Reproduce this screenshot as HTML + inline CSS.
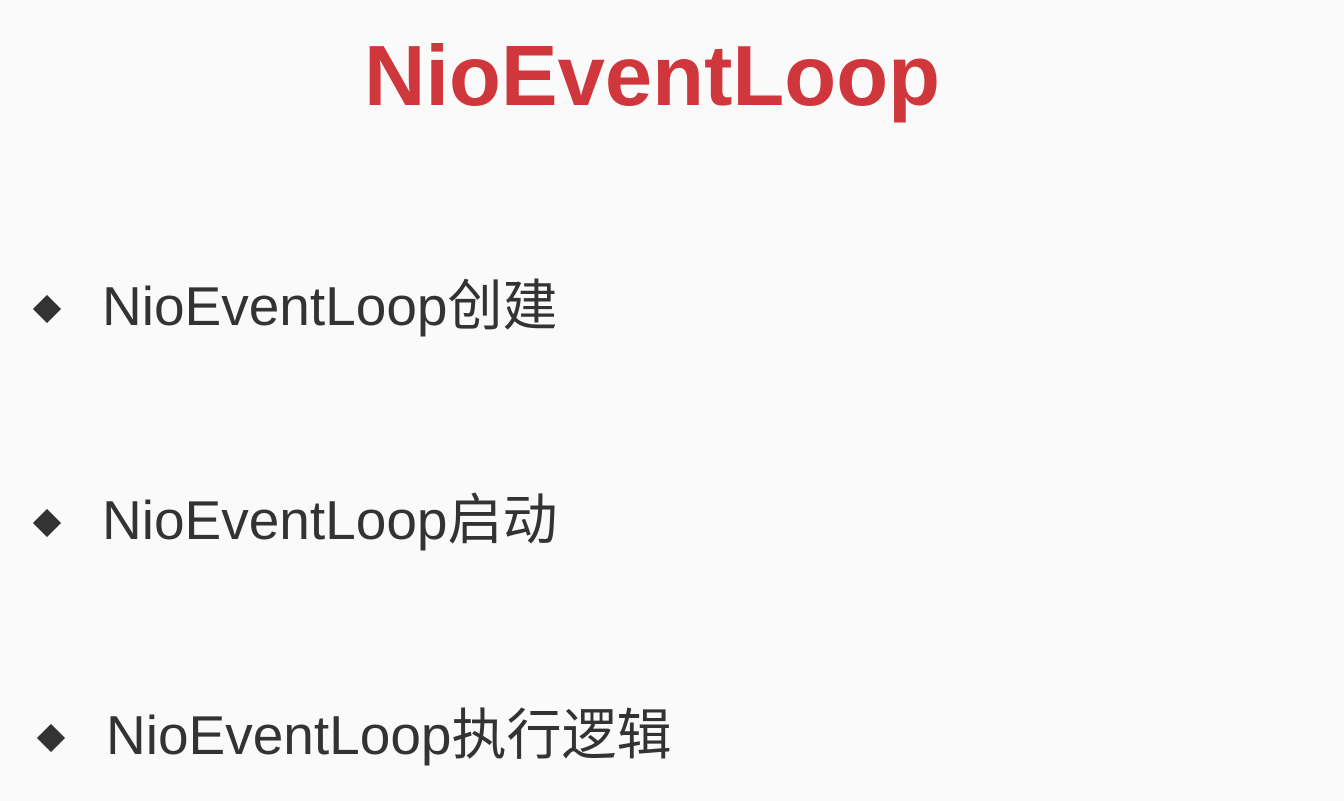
<!DOCTYPE html>
<html><head><meta charset="utf-8"><style>
body{margin:0;width:1344px;height:801px;background:#fafafa;position:relative;overflow:hidden;font-family:"Liberation Sans","Noto Sans CJK SC",sans-serif}
.t{position:absolute;left:364px;top:28px;font-size:85px;font-weight:bold;color:#d0373c;line-height:1.149;white-space:nowrap;letter-spacing:0px}
.i{position:absolute;font-size:55px;color:#333;line-height:1.149;white-space:nowrap}
.d{position:absolute;width:20px;height:20px;background:#333;transform:rotate(45deg)}
</style></head><body>
<div class="t">NioEventLoop</div>
<div class="d" style="left:37px;top:299px"></div>
<div class="i" style="left:102px;top:275px">NioEventLoop创建</div>
<div class="d" style="left:37px;top:513px"></div>
<div class="i" style="left:102px;top:489px">NioEventLoop启动</div>
<div class="d" style="left:41px;top:728px"></div>
<div class="i" style="left:106px;top:704px">NioEventLoop执行逻辑</div>
</body></html>
